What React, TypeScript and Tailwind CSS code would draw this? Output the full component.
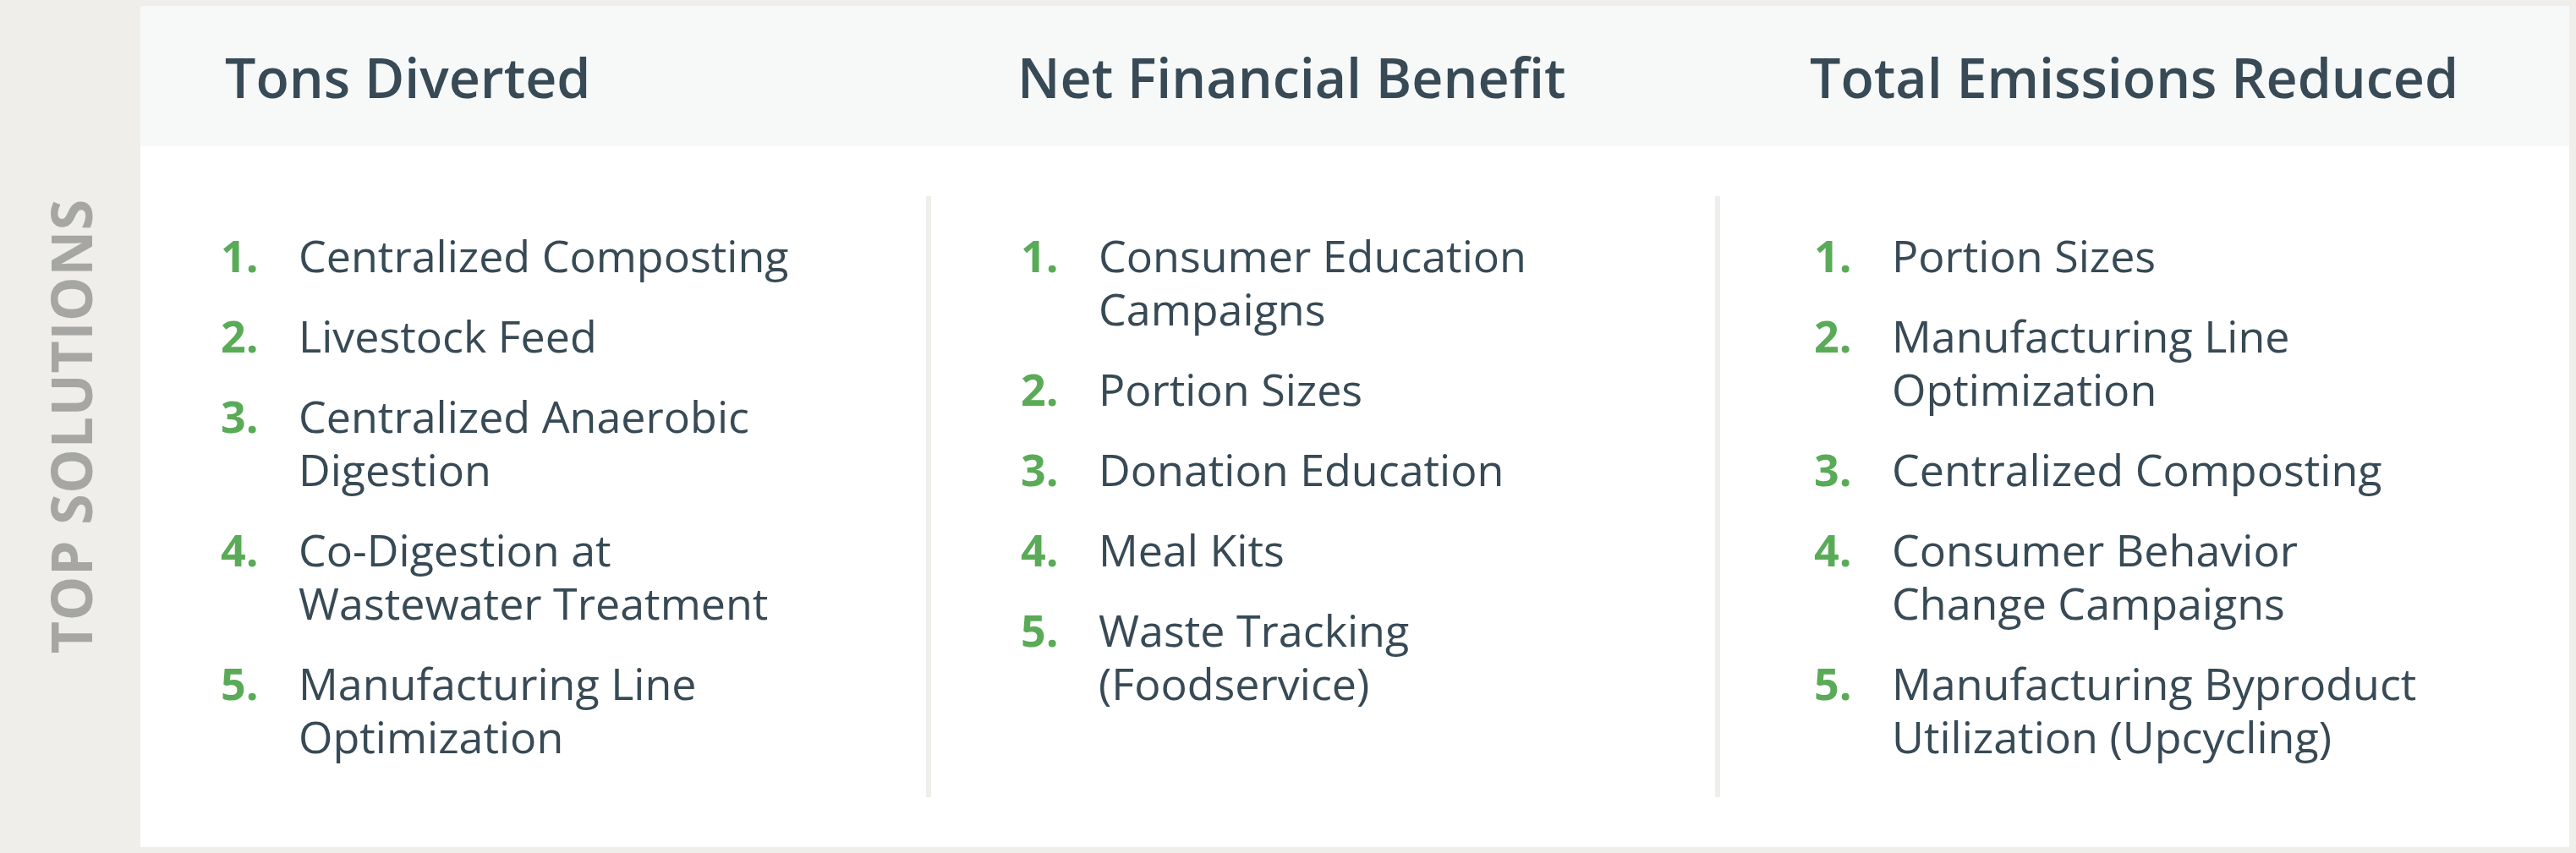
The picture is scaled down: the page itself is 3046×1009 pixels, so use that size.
const columns = [
	{
		title: "Tons Diverted",
		items: [
			["Centralized Composting"],
			["Livestock Feed"],
			["Centralized Anaerobic", "Digestion"],
			["Co-Digestion at", "Wastewater Treatment"],
			["Manufacturing Line", "Optimization"],
		],
	},
	{
		title: "Net Financial Benefit",
		items: [
			["Consumer Education", "Campaigns"],
			["Portion Sizes"],
			["Donation Education"],
			["Meal Kits"],
			["Waste Tracking", "(Foodservice)"],
		],
	},
	{
		title: "Total Emissions Reduced",
		items: [
			["Portion Sizes"],
			["Manufacturing Line", "Optimization"],
			["Centralized Composting"],
			["Consumer Behavior", "Change Campaigns"],
			["Manufacturing Byproduct", "Utilization (Upcycling)"],
		],
	},
];

function SolutionList({ items }: { items: string[][] }) {
	return (
		<ol className="flex flex-col gap-[32px]">
			{items.map((lines, i) => (
				<li key={i} className="flex text-[52px] leading-[63px]">
					<span className="w-[92px] shrink-0 font-bold text-[#5aab57]">{i + 1}.</span>
					<p className="whitespace-nowrap text-[#374a55]">
						{lines[0]}
						{lines[1] && (
							<>
								<br />
								{lines[1]}
							</>
						)}
					</p>
				</li>
			))}
		</ol>
	);
}

export default function App() {
	return (
		<div className="flex h-[1009px] w-[3046px] bg-[#efeeea] pt-[7px] pr-[8px] pb-[7px] font-['Open_Sans',sans-serif]">
			<div className="flex w-[166px] shrink-0 items-center justify-center">
				<p className="rotate-180 text-[66px] leading-none font-bold tracking-[0.012em] text-[#a6a6a4] [writing-mode:vertical-rl]">
					TOP SOLUTIONS
				</p>
			</div>

			<div className="flex flex-1 flex-col">
				<div className="grid h-[166px] grid-cols-[929px_933px_1fr] items-center bg-[#f7f9f9] pt-[3px]">
					<h2 className="pl-[100px] text-[64.5px] leading-none font-semibold text-[#374a55]">
						{columns[0].title}
					</h2>
					<h2 className="pl-[108px] text-[64.5px] leading-none font-semibold text-[#374a55]">
						{columns[1].title}
					</h2>
					<h2 className="pl-[112px] text-[64.5px] leading-none font-semibold text-[#374a55]">
						{columns[2].title}
					</h2>
				</div>

				<div className="grid flex-1 grid-cols-[929px_933px_1fr] bg-white py-[59px]">
					<div className="pt-[38px] pl-[95px]">
						<SolutionList items={columns[0].items} />
					</div>
					<div className="border-l-[6px] border-[#efeeea] pt-[38px] pl-[106px]">
						<SolutionList items={columns[1].items} />
					</div>
					<div className="border-l-[6px] border-[#efeeea] pt-[38px] pl-[111px]">
						<SolutionList items={columns[2].items} />
					</div>
				</div>
			</div>
		</div>
	);
}
